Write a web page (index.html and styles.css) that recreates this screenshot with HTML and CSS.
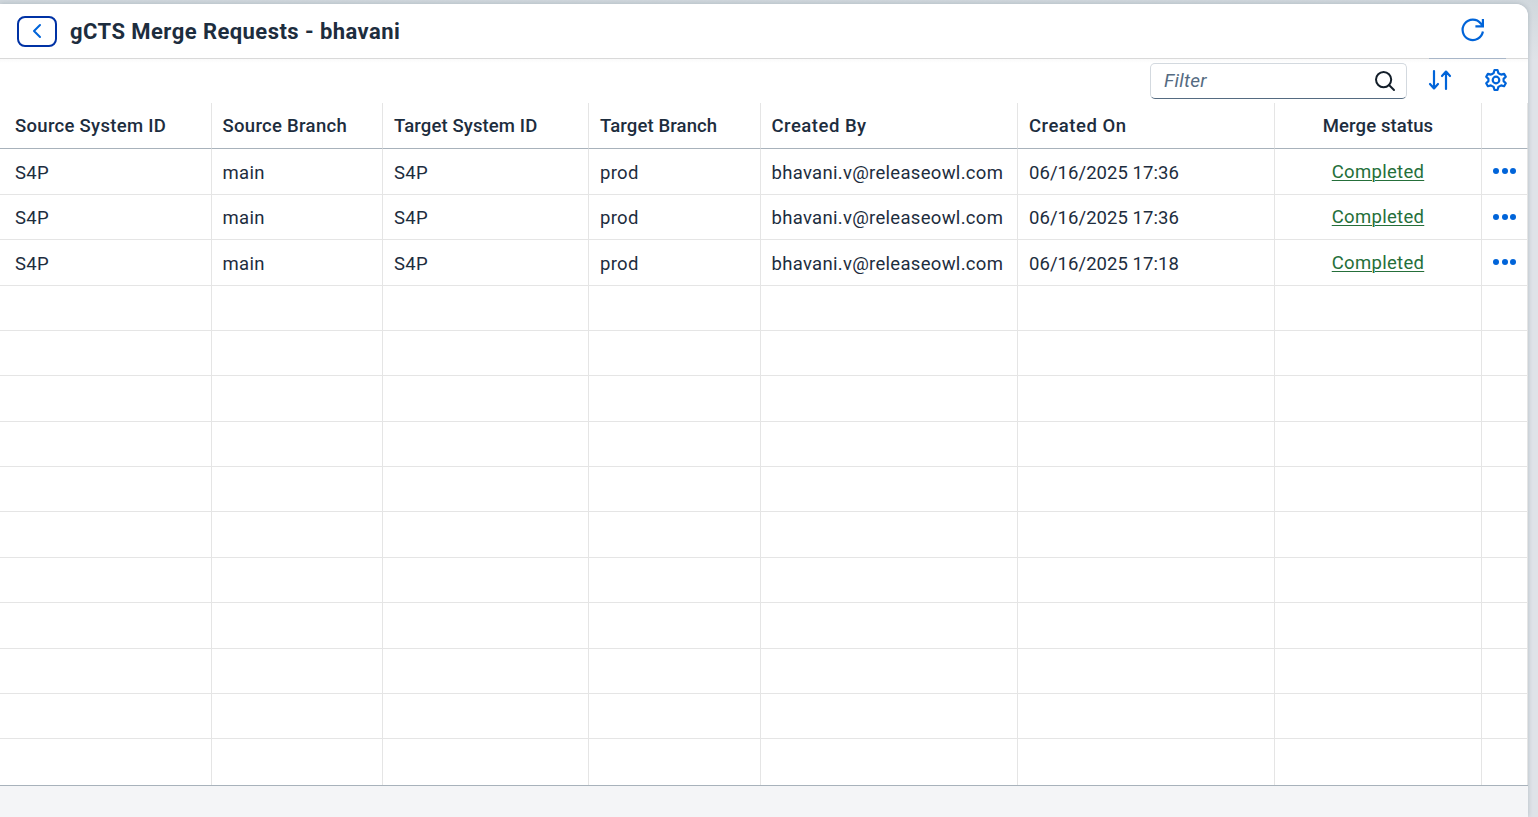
FILE: index.html
```
<!DOCTYPE html>
<html lang="en">
<head>
<meta charset="utf-8">
<title>gCTS Merge Requests</title>
<link rel="stylesheet" href="styles.css">
</head>
<body>
<main class="page">
  <header class="title-bar">
    <button class="back" aria-label="Back"><svg width="10" height="16" viewBox="0 0 10 16"><path d="M8 2 2 8l6 6"/></svg></button>
    <h1 class="title">gCTS Merge Requests - bhavani</h1>
    <button class="icon-btn refresh" aria-label="Refresh"><svg width="26" height="26" viewBox="0 0 26 26"><path d="M22.900 14.500A10.200 10.200 0 1 1 20.800 6.500L22.900 8.600M22.900 2v7.300h-7.500"/></svg></button>
  </header>
  <div class="toolbar">
    <div class="search"><span class="placeholder">Filter</span><svg width="22" height="22" viewBox="0 0 22 22"><circle cx="9.6" cy="9.6" r="7.6"/><path d="m15 15 5 5"/></svg></div>
    <button class="icon-btn sort" aria-label="Sort"><svg width="24" height="22" viewBox="0 0 24 22"><path d="M6 2v17M2 15l4 4.4L10 15M18 20V3M14 7l4-4.400L22 7"/></svg></button>
    <button class="icon-btn settings" aria-label="Settings"><svg width="24" height="24" viewBox="0 0 24 24"><circle cx="12" cy="12" r="3.300"/><path d="M10.500 2h3l.9 3.100q1.500 1 2.700 1.500l3-.8 1.700 2.900-2.200 2.200v2.200l2.200 2.200-1.700 2.900-3-.8q-1.200.5-2.700 1.500l-.9 3.100h-3l-.9-3.100q-1.500-1-2.700-1.500l-3 .8-1.700-2.900 2.200-2.200v-2.200l-2.200-2.200 1.700-2.900 3 .8q1.200-.5 2.700-1.500z"/></svg></button>
  </div>
  <section class="table">
    <div class="cell head">Source System ID</div><div class="cell head">Source Branch</div><div class="cell head tight">Target System ID</div><div class="cell head tight">Target Branch</div><div class="cell head wide">Created By</div><div class="cell head wide">Created On</div><div class="cell head center tight">Merge status</div><div class="cell head"></div>
    <div class="cell">S4P</div><div class="cell">main</div><div class="cell">S4P</div><div class="cell">prod</div><div class="cell">bhavani.v@releaseowl.com</div><div class="cell date">06/16/2025 17:36</div><div class="cell center"><a class="status">Completed</a></div><div class="cell more"><i></i><i></i><i></i></div>
    <div class="cell">S4P</div><div class="cell">main</div><div class="cell">S4P</div><div class="cell">prod</div><div class="cell">bhavani.v@releaseowl.com</div><div class="cell date">06/16/2025 17:36</div><div class="cell center"><a class="status">Completed</a></div><div class="cell more"><i></i><i></i><i></i></div>
    <div class="cell">S4P</div><div class="cell">main</div><div class="cell">S4P</div><div class="cell">prod</div><div class="cell">bhavani.v@releaseowl.com</div><div class="cell date">06/16/2025 17:18</div><div class="cell center"><a class="status">Completed</a></div><div class="cell more"><i></i><i></i><i></i></div>
    <div class="cell"></div><div class="cell"></div><div class="cell"></div><div class="cell"></div><div class="cell"></div><div class="cell"></div><div class="cell"></div><div class="cell"></div>
    <div class="cell"></div><div class="cell"></div><div class="cell"></div><div class="cell"></div><div class="cell"></div><div class="cell"></div><div class="cell"></div><div class="cell"></div>
    <div class="cell"></div><div class="cell"></div><div class="cell"></div><div class="cell"></div><div class="cell"></div><div class="cell"></div><div class="cell"></div><div class="cell"></div>
    <div class="cell"></div><div class="cell"></div><div class="cell"></div><div class="cell"></div><div class="cell"></div><div class="cell"></div><div class="cell"></div><div class="cell"></div>
    <div class="cell"></div><div class="cell"></div><div class="cell"></div><div class="cell"></div><div class="cell"></div><div class="cell"></div><div class="cell"></div><div class="cell"></div>
    <div class="cell"></div><div class="cell"></div><div class="cell"></div><div class="cell"></div><div class="cell"></div><div class="cell"></div><div class="cell"></div><div class="cell"></div>
    <div class="cell"></div><div class="cell"></div><div class="cell"></div><div class="cell"></div><div class="cell"></div><div class="cell"></div><div class="cell"></div><div class="cell"></div>
    <div class="cell"></div><div class="cell"></div><div class="cell"></div><div class="cell"></div><div class="cell"></div><div class="cell"></div><div class="cell"></div><div class="cell"></div>
    <div class="cell"></div><div class="cell"></div><div class="cell"></div><div class="cell"></div><div class="cell"></div><div class="cell"></div><div class="cell"></div><div class="cell"></div>
    <div class="cell"></div><div class="cell"></div><div class="cell"></div><div class="cell"></div><div class="cell"></div><div class="cell"></div><div class="cell"></div><div class="cell"></div>
    <div class="cell last"></div><div class="cell last"></div><div class="cell last"></div><div class="cell last"></div><div class="cell last"></div><div class="cell last"></div><div class="cell last"></div><div class="cell last"></div>
  </section>
</main>
</body>
</html>
```
FILE: styles.css
```
* { box-sizing: border-box; }
body {
  margin: 0;
  height: 817px;
  padding: 4px 10px 0 0;
  overflow: hidden;
  background: linear-gradient(#d1d8dd, #dfe3e8 60px);
  color: #1d2d3e;
  font-family: Roboto, "Liberation Sans", sans-serif;
}
.page {
  height: 813px;
  background: #f4f5f7;
  border-radius: 0 12px 0 0;
  box-shadow: 0 0 5px rgba(34, 53, 72, .22);
}
.title-bar {
  position: relative;
  display: flex;
  align-items: center;
  height: 55px;
  padding: 0 42px 0 17px;
  background: #fff;
  border-bottom: 1px solid #d9d9d9;
  border-radius: 0 12px 0 0;
}
/* accent segment lying over the header's bottom border */
.title-bar::after {
  content: "";
  position: absolute;
  right: 22px;
  bottom: -1px;
  width: 77px;
  height: 1px;
  background: #a8b6c8;
}
button { padding: 0; background: none; border: 0; }
svg { display: block; fill: none; stroke: #0064d9; stroke-width: 2; stroke-linecap: round; stroke-linejoin: round; }
.back {
  display: flex;
  align-items: center;
  justify-content: center;
  width: 40px;
  height: 31px;
  border: 2px solid #0032a5;
  border-radius: 8px;
}
.title {
  margin: 0 auto 0 13px;
  padding-top: 2px;
  font-size: 22px;
  font-weight: 700;
  line-height: 30px;
  letter-spacing: .44px;
  white-space: nowrap;
}
.refresh { padding-bottom: 2px; }
.refresh svg { stroke-width: 2.2; stroke-linecap: butt; stroke-linejoin: miter; }
.toolbar {
  display: flex;
  align-items: center;
  height: 44px;
  padding: 0 20px 0 1150px;
  background: linear-gradient(#fafafa, #fff 4px);
}
.search {
  display: flex;
  align-items: center;
  justify-content: space-between;
  width: 257px;
  height: 36px;
  padding: 0 10px 1px 13px;
  background: #fff;
  border: 1px solid #d3d9df;
  border-bottom-color: #556b81;
  border-radius: 5px;
}
.search svg { stroke: #131e29; }
.placeholder { padding-bottom: 1px; color: #556b82; font-size: 19px; font-style: italic; letter-spacing: .25px; }
.sort, .settings { padding-bottom: 2px; }
.sort svg { stroke-width: 2.2; }
.settings svg { stroke-width: 2.2; }
.sort { margin-left: 21px; }
.settings { margin-left: 32px; }
.table {
  display: grid;
  grid-template-columns: 212px 171px 206px 172px 257px 257px 207px 46px;
  grid-template-rows: 46px 46px 45px 46px 45px 45px 46px 45px 45px 46px 45px 46px 45px 45px 46px;
  width: 1528px;
  border-bottom: 1px solid #a8b2bb;
  background: #fff;
}
.cell {
  display: flex;
  align-items: center;
  padding: 2px 0 0 10.500px;
  border-right: 1px solid #e5e5e5;
  border-bottom: 1px solid #e5e5e5;
  font-size: 18.5px;
  line-height: 24px;
  letter-spacing: .3px;
  white-space: nowrap;
}
.cell:nth-child(8n + 1) { padding-left: 15px; }
.cell:nth-child(8n + 3), .cell:nth-child(8n + 4), .cell:nth-child(8n + 6) { padding-left: 11px; }
.head { padding-top: 0; border-bottom-color: #a8b2bb; font-weight: 500; }
.head.tight { letter-spacing: .12px; }
.head.wide { letter-spacing: .5px; }
.date { letter-spacing: .05px; }
.last { border-bottom: 0; }
.cell.center { justify-content: center; padding-left: 0; }
.center { padding-top: 0; }
.status { color: #256f3a; text-decoration: underline; text-decoration-thickness: 1px; text-underline-offset: 2px; }
.cell.more { justify-content: center; gap: 2.500px; padding: 0 0 1px; }
.more i { width: 6px; height: 6px; border-radius: 50%; background: #0064d9; }
```
